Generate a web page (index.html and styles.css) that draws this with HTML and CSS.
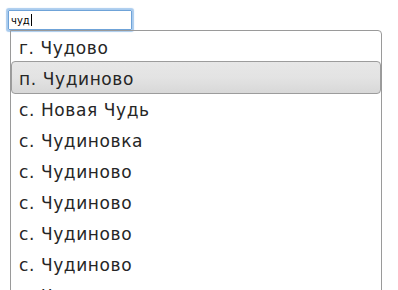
FILE: index.html
```html
<!DOCTYPE html>
<html>
<head>
<meta charset="utf-8">
<link rel="stylesheet" href="styles.css">
</head>
<body>
<div class="wrap">
  <div class="field"><span class="val">чуд</span><span class="caret"></span></div>
  <ul class="menu">
    <li class="item">г. Чудово</li>
    <li class="item active">п. Чудиново</li>
    <li class="item">с. Новая Чудь</li>
    <li class="item">с. Чудиновка</li>
    <li class="item">с. Чудиново</li>
    <li class="item">с. Чудиново</li>
    <li class="item">с. Чудиново</li>
    <li class="item">с. Чудиново</li>
    <li class="item">с. Чудиново</li>
  </ul>
</div>
</body>
</html>
```
FILE: styles.css
```css
html, body {
  margin: 0;
  padding: 0;
  background: #fff;
  overflow: hidden;
  height: 290px;
}
.wrap {
  padding: 10px 0 0 8px;
}
.field {
  box-sizing: border-box;
  width: 124px;
  height: 20px;
  border: 1px solid #6fa3d8;
  box-shadow: 0 0 1px 2px #a9cbee;
  border-radius: 1px;
  display: flex;
  align-items: center;
  padding-left: 2px;
  font-family: "DejaVu Sans", sans-serif;
  font-size: 10px;
  color: #000;
}
.caret {
  display: inline-block;
  width: 1px;
  height: 12px;
  background: #000;
  margin-left: 1px;
}
.menu {
  list-style: none;
  margin: 0 0 0 2px;
  padding: 0;
  width: 372px;
  box-sizing: border-box;
  border: 1px solid #9a9a9a;
  border-top-right-radius: 4px;
  font-family: "DejaVu Sans", Verdana, sans-serif;
  font-size: 17px;
  letter-spacing: 0.6px;
  color: #262626;
}
.item {
  height: 31px;
  box-sizing: border-box;
  border: 1px solid transparent;
  border-radius: 4px;
  padding-left: 7px;
  padding-top: 2px;
  display: flex;
  align-items: center;
}
.item.active {
  border-color: #9c9c9c;
  background: linear-gradient(#e7e7e7, #e3e3e3 50%, #d8d8d8);
  height: 33px;
  margin: -1px 0;
}
```
